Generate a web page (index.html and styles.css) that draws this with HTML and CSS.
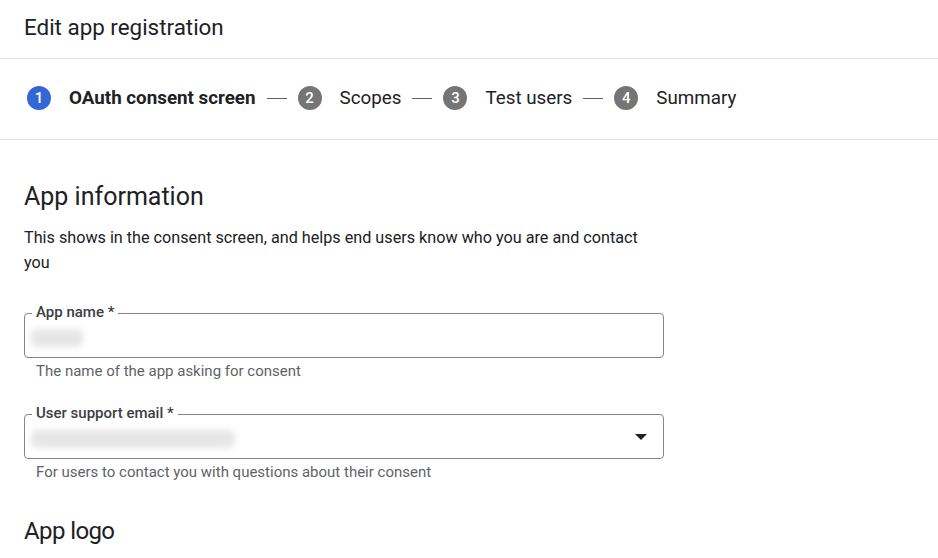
FILE: index.html
```html
<!DOCTYPE html>
<html lang="en">
<head>
    <meta charset="UTF-8">
    <meta name="viewport" content="width=device-width, initial-scale=1.0">
    <title>Edit app registration</title>
    <link rel="stylesheet" href="styles.css">
</head>
<body>
    <div class="page-header">
        <h1>Edit app registration</h1>
    </div>

    <div class="stepper">
        <div class="step active">
            <span class="step-num">1</span>
            <span class="step-label">OAuth consent screen</span>
        </div>
        <span class="step-line"></span>
        <div class="step">
            <span class="step-num">2</span>
            <span class="step-label">Scopes</span>
        </div>
        <span class="step-line"></span>
        <div class="step">
            <span class="step-num">3</span>
            <span class="step-label">Test users</span>
        </div>
        <span class="step-line"></span>
        <div class="step">
            <span class="step-num">4</span>
            <span class="step-label">Summary</span>
        </div>
    </div>

    <div class="content">
        <h2>App information</h2>
        <p class="description">This shows in the consent screen, and helps end users know who you are and contact you</p>

        <div class="field field-first">
            <span class="field-label">App name *</span>
            <span class="blurred blurred-name"></span>
        </div>
        <p class="hint">The name of the app asking for consent</p>

        <div class="field field-select">
            <span class="field-label">User support email *</span>
            <span class="blurred blurred-email"></span>
            <span class="arrow"></span>
        </div>
        <p class="hint">For users to contact you with questions about their consent</p>

        <h2 class="section-title">App logo</h2>
    </div>
</body>
</html>
```

FILE: styles.css
```css
* {
    box-sizing: border-box;
    margin: 0;
    padding: 0;
}

body {
    font-family: Roboto, 'Liberation Sans', sans-serif;
    color: #202124;
    background: #fff;
    overflow: hidden;
}

.page-header {
    height: 59px;
    padding: 13px 24px 0;
    border-bottom: 1px solid #e0e0e0;
}

.page-header h1 {
    font-size: 22.4px;
    font-weight: 400;
    line-height: 28px;
    color: #202124;
}

.stepper {
    height: 81px;
    display: flex;
    align-items: center;
    padding: 0 27px 2px;
    border-bottom: 1px solid #e0e0e0;
}

.step {
    display: flex;
    align-items: center;
}

.step-num {
    width: 24px;
    height: 24px;
    border-radius: 50%;
    background: #757575;
    color: #fff;
    font-size: 15px;
    font-weight: 500;
    display: flex;
    align-items: center;
    justify-content: center;
    margin-right: 18px;
}

.step-label {
    font-size: 18.8px;
    color: #202124;
}

.step.active .step-num {
    background: #3367d6;
}

.step.active .step-label {
    font-weight: 700;
}

.step-line {
    width: 20px;
    height: 1px;
    background: #5f6368;
    margin: 0 11px;
}

.content {
    max-width: 688px;
    padding: 0 24px;
}

h2 {
    font-size: 25px;
    font-weight: 400;
    line-height: 32px;
    margin-top: 41px;
}

.description {
    font-size: 16.2px;
    line-height: 25px;
    margin-top: 12px;
    max-width: 625px;
}

.field {
    position: relative;
    height: 45px;
    border: 1px solid #80868b;
    border-radius: 4px;
    margin-top: 33px;
    display: flex;
    align-items: center;
    padding: 0 16px 0 6px;
}

.field-first {
    margin-top: 38px;
}

.field-label {
    position: absolute;
    top: -11px;
    left: 7px;
    padding: 0 4px;
    background: #fff;
    font-size: 15px;
    font-weight: 500;
    line-height: 18px;
    color: #3c4043;
}

.blurred {
    height: 18px;
    background: #e6e6e6;
    border-radius: 6px;
    filter: blur(3px);
    margin-top: 4px;
}

.blurred-name {
    width: 52px;
}

.blurred-email {
    width: 204px;
}

.arrow {
    margin-left: auto;
    width: 0;
    height: 0;
    border-left: 6px solid transparent;
    border-right: 6px solid transparent;
    border-top: 6px solid #202124;
}

.hint {
    font-size: 15px;
    line-height: 20px;
    color: #5f6368;
    padding-left: 12px;
    margin-top: 3px;
}

.section-title {
    font-size: 24px;
    letter-spacing: -0.6px;
    margin-top: 33px;
}
```
